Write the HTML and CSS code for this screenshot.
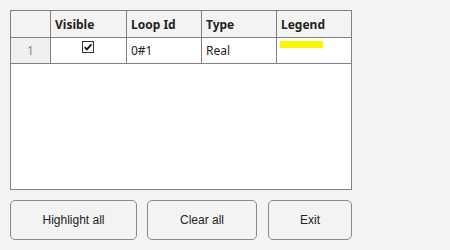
FILE: index.html
```html
<!DOCTYPE html>
<html>
<head>
<meta charset="utf-8">
<link rel="stylesheet" href="styles.css">
</head>
<body>
<div class="app">
  <div class="grid">
    <div class="row head">
      <div class="cell c0"></div>
      <div class="cell c1">Visible</div>
      <div class="cell c2">Loop Id</div>
      <div class="cell c3">Type</div>
      <div class="cell c4">Legend</div>
    </div>
    <div class="row body">
      <div class="cell c0 num">1</div>
      <div class="cell c1 center">
        <svg class="check" width="12" height="12" viewBox="0 0 12 12">
          <rect x="0.5" y="0.5" width="11" height="11" fill="#fff" stroke="#333"/>
          <path d="M2.6 6.2 L4.9 8.4 L9.4 3.4" fill="none" stroke="#111" stroke-width="1.8"/>
        </svg>
      </div>
      <div class="cell c2">0#1</div>
      <div class="cell c3">Real</div>
      <div class="cell c4"><span class="legend"></span></div>
    </div>
  </div>
  <div class="buttons">
    <button class="btn b1">Highlight all</button>
    <button class="btn b2">Clear all</button>
    <button class="btn b3">Exit</button>
  </div>
</div>
</body>
</html>
```
FILE: styles.css
```css
html, body {
  margin: 0;
  padding: 0;
  background: #f3f3f3;
  width: 450px;
  height: 250px;
  overflow: hidden;
}
.app {
  padding: 10px 0 0 10px;
}
.grid {
  width: 342px;
  height: 180px;
  box-sizing: border-box;
  border: 1px solid #808080;
  background: #fff;
}
.row {
  display: flex;
  box-sizing: border-box;
  border-bottom: 1px solid #808080;
}
.row.head {
  height: 27px;
  background: #f3f3f3;
}
.row.body {
  height: 26px;
  background: #fff;
}
.cell {
  box-sizing: border-box;
  border-right: 1px solid #808080;
  padding: 0 4px;
  font-family: "Noto Sans", "DejaVu Sans", sans-serif;
  font-size: 12px;
  color: #222;
  display: flex;
  align-items: center;
  white-space: nowrap;
}
.head .cell {
  font-weight: bold;
  color: #222;
  padding-top: 1px;
}
.body .cell {
  align-items: flex-start;
  padding-top: 4px;
}
.c0 { width: 40px; }
.c1 { width: 76px; }
.c2 { width: 75px; }
.c3 { width: 75px; }
.c4 { width: 74px; border-right: none; }
.body .c0 {
  background: #f0f0f0;
  color: #888;
  justify-content: center;
}
.center {
  justify-content: center;
}
.check {
  display: block;
  margin-top: -1px;
  margin-left: -1px;
}
.legend {
  display: block;
  width: 43px;
  height: 7px;
  background: #f7f700;
  margin-left: -1px;
  margin-top: -1px;
}
.buttons {
  display: flex;
  margin-top: 10px;
  gap: 10px;
}
.btn {
  height: 40px;
  box-sizing: border-box;
  border: 1px solid #8a8a8a;
  border-radius: 5px;
  background: #f3f3f3;
  font-family: "Liberation Sans", Arial, sans-serif;
  font-size: 12px;
  color: #222;
  padding: 0;
  margin: 0;
}
.b1 { width: 127px; }
.b2 { width: 110px; }
.b3 { width: 84px; margin-left: 1px; }
```
